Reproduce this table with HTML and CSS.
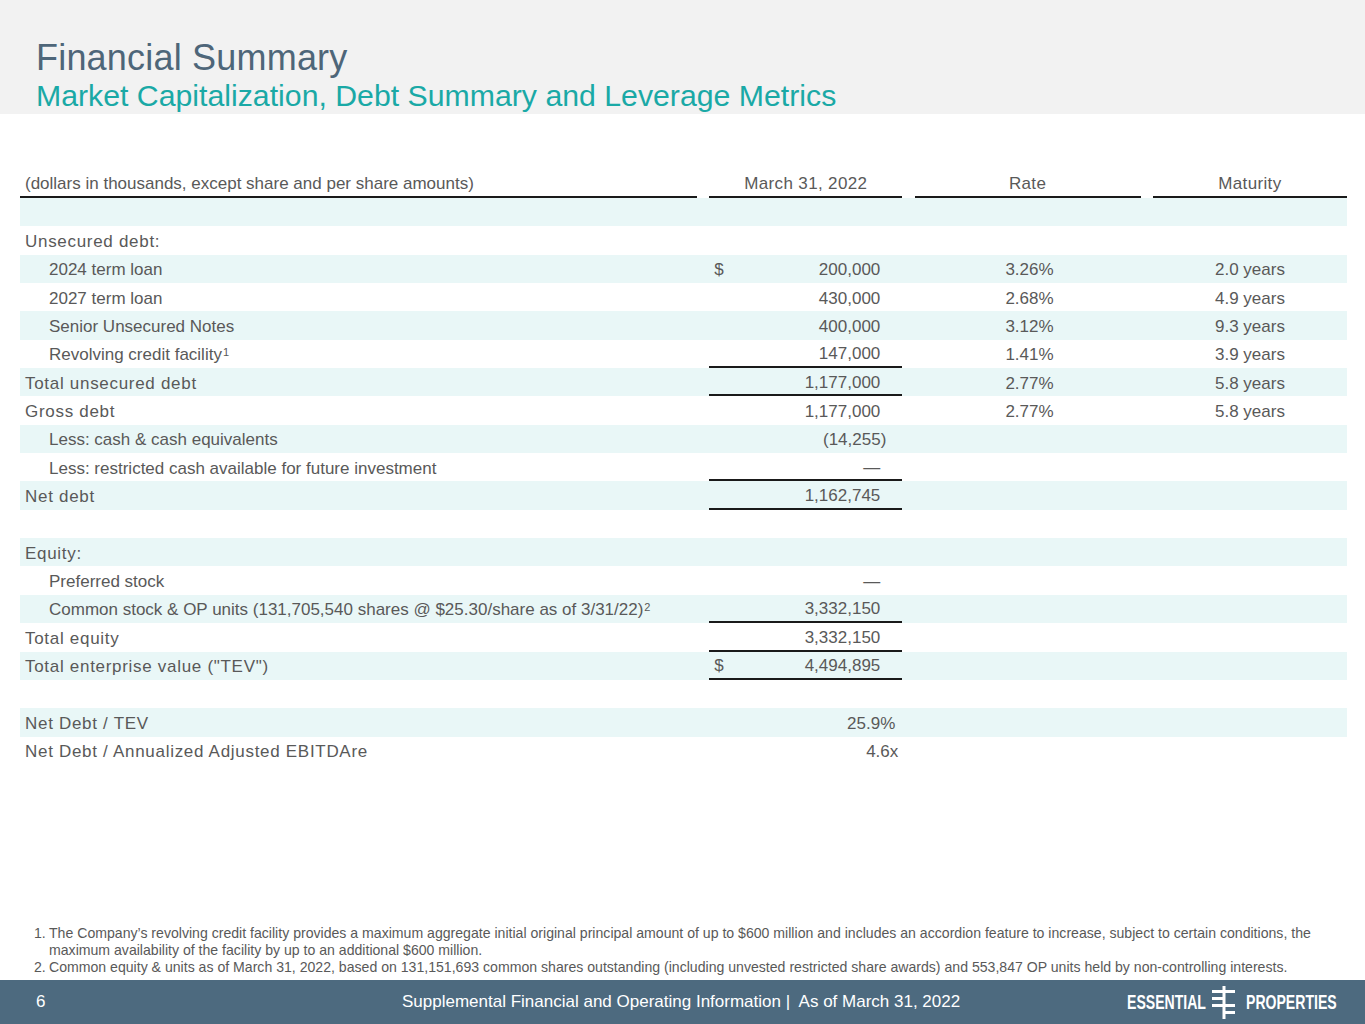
FILE: index.html
```html
<!DOCTYPE html>
<html lang="en">
<head>
<meta charset="utf-8">
<title>Financial Summary</title>
<link rel="stylesheet" href="styles.css">
</head>
<body>
<div class="page">
  <header class="band">
    <h1 class="title">Financial Summary</h1>
    <h2 class="subtitle">Market Capitalization, Debt Summary and Leverage Metrics</h2>
  </header>

  <section class="table">
    <div class="row head">
      <div class="c plain">(dollars in thousands, except share and per share amounts)</div>
      <div class="c hc">March 31, 2022</div>
      <div class="c hc">Rate</div>
      <div class="c hc">Maturity</div>
    </div>

    <div class="row sh"><div class="c lbl"></div><div class="c val"></div><div class="c rate"></div><div class="c mat"></div></div>
    <div class="row"><div class="c lbl sp">Unsecured debt:</div><div class="c val"></div><div class="c rate"></div><div class="c mat"></div></div>
    <div class="row sh"><div class="c lbl ind">2024 term loan</div><div class="c val"><span class="cur">$</span><span>200,000</span></div><div class="c rate">3.26%</div><div class="c mat">2.0 years</div></div>
    <div class="row"><div class="c lbl ind">2027 term loan</div><div class="c val"><span>430,000</span></div><div class="c rate">2.68%</div><div class="c mat">4.9 years</div></div>
    <div class="row sh"><div class="c lbl ind">Senior Unsecured Notes</div><div class="c val"><span>400,000</span></div><div class="c rate">3.12%</div><div class="c mat">9.3 years</div></div>
    <div class="row"><div class="c lbl ind"><span>Revolving credit facility<sup>1</sup></span></div><div class="c val ul"><span>147,000</span></div><div class="c rate">1.41%</div><div class="c mat">3.9 years</div></div>
    <div class="row sh"><div class="c lbl sp">Total unsecured debt</div><div class="c val ul"><span>1,177,000</span></div><div class="c rate">2.77%</div><div class="c mat">5.8 years</div></div>
    <div class="row"><div class="c lbl sp">Gross debt</div><div class="c val"><span>1,177,000</span></div><div class="c rate">2.77%</div><div class="c mat">5.8 years</div></div>
    <div class="row sh"><div class="c lbl ind">Less: cash &amp; cash equivalents</div><div class="c val"><span class="neg">(14,255)</span></div><div class="c rate"></div><div class="c mat"></div></div>
    <div class="row"><div class="c lbl ind">Less: restricted cash available for future investment</div><div class="c val ul"><span>—</span></div><div class="c rate"></div><div class="c mat"></div></div>
    <div class="row sh"><div class="c lbl sp">Net debt</div><div class="c val ul"><span>1,162,745</span></div><div class="c rate"></div><div class="c mat"></div></div>
    <div class="row"><div class="c lbl"></div><div class="c val"></div><div class="c rate"></div><div class="c mat"></div></div>
    <div class="row sh"><div class="c lbl sp">Equity:</div><div class="c val"></div><div class="c rate"></div><div class="c mat"></div></div>
    <div class="row"><div class="c lbl ind">Preferred stock</div><div class="c val"><span>—</span></div><div class="c rate"></div><div class="c mat"></div></div>
    <div class="row sh"><div class="c lbl ind"><span>Common stock &amp; OP units (131,705,540 shares @ $25.30/share as of 3/31/22)<sup>2</sup></span></div><div class="c val ul"><span>3,332,150</span></div><div class="c rate"></div><div class="c mat"></div></div>
    <div class="row"><div class="c lbl sp">Total equity</div><div class="c val ul"><span>3,332,150</span></div><div class="c rate"></div><div class="c mat"></div></div>
    <div class="row sh"><div class="c lbl sp">Total enterprise value ("TEV")</div><div class="c val ul"><span class="cur">$</span><span>4,494,895</span></div><div class="c rate"></div><div class="c mat"></div></div>
    <div class="row"><div class="c lbl"></div><div class="c val"></div><div class="c rate"></div><div class="c mat"></div></div>
    <div class="row sh"><div class="c lbl sp">Net Debt / TEV</div><div class="c val ratio1"><span>25.9%</span></div><div class="c rate"></div><div class="c mat"></div></div>
    <div class="row"><div class="c lbl sp">Net Debt / Annualized Adjusted EBITDAre</div><div class="c val ratio2"><span>4.6x</span></div><div class="c rate"></div><div class="c mat"></div></div>
  </section>

  <section class="notes">
    <p><span class="n">1.</span>The Company’s revolving credit facility provides a maximum aggregate initial original principal amount of up to $600 million and includes an accordion feature to increase, subject to certain conditions, the maximum availability of the facility by up to an additional $600 million.</p>
    <p><span class="n">2.</span>Common equity &amp; units as of March 31, 2022, based on 131,151,693 common shares outstanding (including unvested restricted share awards) and 553,847 OP units held by non-controlling interests.</p>
  </section>

  <footer class="foot">
    <div class="pg">6</div>
    <div class="ftext">Supplemental Financial and Operating Information |&nbsp; As of March 31, 2022</div>
    <div class="logo">
      <span class="lw w1"><span class="lt">ESSENTIAL</span></span>
      <svg class="mark" width="26" height="33" viewBox="0 0 26 33" aria-hidden="true">
        <rect x="11.5" y="0" width="3" height="33" fill="#fff"/>
        <rect x="1" y="4" width="23" height="3" fill="#fff"/>
        <rect x="1" y="11" width="13" height="3" fill="#fff"/>
        <rect x="1" y="18" width="23" height="3" fill="#fff"/>
        <rect x="12" y="25" width="12" height="3" fill="#fff"/>
      </svg>
      <span class="lw w2"><span class="lt">PROPERTIES</span></span>
    </div>
  </footer>
</div>
</body>
</html>
```

FILE: styles.css
```css
* { box-sizing: border-box; }
html, body { margin: 0; padding: 0; }
body {
  font-family: "Liberation Sans", Arial, sans-serif;
  color: #595959;
  background: #fff;
}
.page {
  width: 1365px;
  height: 1024px;
  display: flex;
  flex-direction: column;
}
.band {
  background: #f2f2f2;
  height: 114px;
  padding: 37px 0 0 36px;
}
.title {
  margin: 0;
  font-weight: normal;
  font-size: 36px;
  line-height: 41px;
  letter-spacing: 0.2px;
  color: #4e6679;
}
.subtitle {
  margin: 0;
  font-weight: normal;
  font-size: 30.25px;
  line-height: 36px;
  color: #1aa9a6;
}

.table {
  margin: 56px 18px 0 20px;
  font-size: 17px;
}
.row {
  display: grid;
  grid-template-columns: 677px 193px 226px 194px;
  column-gap: 12.3px;
  height: 28.35px;
  align-items: stretch;
}
.row.sh { background: #e9f7f7; }
.row.head { height: 28px; }
.c {
  display: flex;
  align-items: center;
  white-space: nowrap;
  padding-top: 3px;
}
.head .c {
  border-bottom: 2px solid #1a1a1a;
  padding-top: 2px;
}
.head .plain { padding-left: 5px; }
.head .hc { justify-content: center; letter-spacing: 0.35px; }
.lbl { padding-left: 5px; }
.lbl.ind { padding-left: 29px; }
.lbl.sp { letter-spacing: 0.7px; }
sup {
  font-size: 11px;
  line-height: 0;
  vertical-align: 4px;
  letter-spacing: 0;
  margin-left: 1px;
}
.val {
  justify-content: flex-end;
  padding-right: 22px;
  padding-left: 5px;
  position: relative;
}
.val .cur {
  position: absolute;
  left: 5px;
}
.val .neg { margin-right: -6px; }
.val.ul { border-bottom: 2px solid #1a1a1a; }
.val.ratio1 { padding-right: 7px; }
.val.ratio2 { padding-right: 4px; }
.rate { justify-content: flex-end; padding-right: 87px; }
.mat { justify-content: flex-end; padding-right: 62px; }

.notes {
  margin-top: auto;
  padding: 0 30px 4px 34px;
  font-size: 14.1px;
  line-height: 17px;
  color: #595959;
}
.notes p {
  margin: 0;
  padding-left: 15px;
  text-indent: -15px;
}
.notes .n { display: inline-block; width: 15px; text-indent: 0; }

.foot {
  height: 44px;
  flex: none;
  background: #4d6a7f;
  color: #fff;
  display: flex;
  align-items: center;
  font-size: 17px;
}
.pg { padding-left: 36px; width: 402px; }
.ftext { flex: 1; }
.logo {
  display: flex;
  align-items: center;
  padding-right: 30px;
}
.lw {
  display: block;
  height: 24px;
  white-space: nowrap;
}
.lw.w1 { width: 80px; }
.lw.w2 { width: 89px; }
.lt {
  display: inline-block;
  font-family: "Liberation Sans", Arial, sans-serif;
  font-weight: bold;
  font-size: 21px;
  line-height: 24px;
  transform: scaleX(0.67);
  transform-origin: left center;
}
.mark { display: block; margin: 1px 9px 0 4px; }
```
